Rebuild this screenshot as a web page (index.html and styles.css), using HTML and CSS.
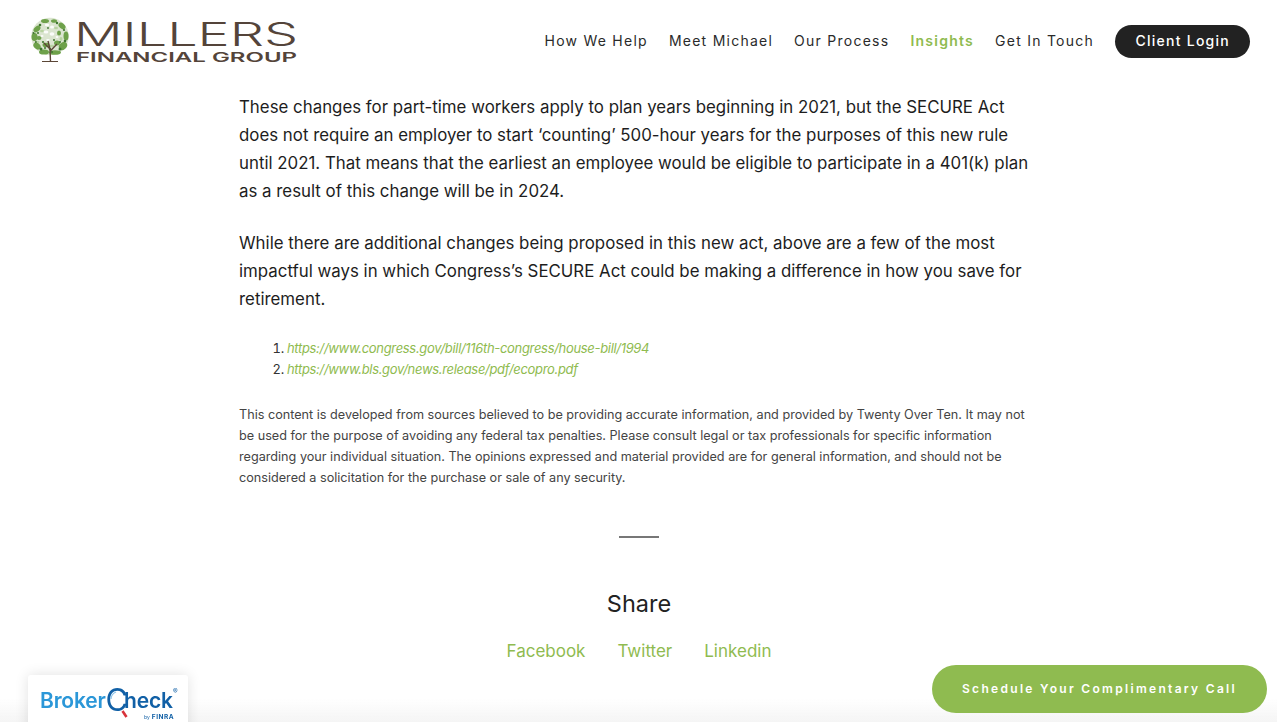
FILE: index.html
```html
<!DOCTYPE html>
<html lang="en">
<head>
<meta charset="utf-8">
<title>Millers Financial Group</title>
<link rel="stylesheet" href="styles.css">
</head>
<body>
<header class="site-header">
  <a class="logo" href="#" aria-label="Millers Financial Group">
    <svg width="270" height="50" viewBox="0 0 270 50">
      <circle cx="20" cy="20.500" r="18.700" fill="#dbe5d0"/>
      <g fill="#6ea14a">
        <ellipse cx="7" cy="13" rx="4" ry="2.500" transform="rotate(-40 7 13)"/>
        <ellipse cx="4.500" cy="21" rx="3" ry="4"/>
        <ellipse cx="7" cy="30" rx="4" ry="3" transform="rotate(40 7 30)"/>
        <ellipse cx="14" cy="36" rx="5" ry="2.600"/>
        <ellipse cx="25" cy="36.500" rx="6" ry="2.300"/>
        <ellipse cx="33" cy="30" rx="4.500" ry="3.500" transform="rotate(-40 33 30)"/>
        <ellipse cx="36" cy="20" rx="2.500" ry="4.500"/>
        <ellipse cx="32" cy="10" rx="4" ry="2.600" transform="rotate(40 32 10)"/>
        <ellipse cx="15" cy="5" rx="4" ry="2"/>
        <ellipse cx="24" cy="5" rx="3" ry="1.800"/>
        <ellipse cx="16" cy="29" rx="3.500" ry="2.200"/>
        <ellipse cx="27" cy="27" rx="3" ry="2.500"/>
        <ellipse cx="9" cy="22" rx="2.500" ry="2"/>
        <ellipse cx="29" cy="17" rx="2" ry="2.500"/>
      </g>
      <g fill="#3f7530">
        <circle cx="10" cy="9" r="1.300"/><circle cx="3.500" cy="17" r="1.100"/><circle cx="11" cy="33" r="1.500"/><circle cx="20" cy="33" r="1.200"/><circle cx="30" cy="33" r="1.500"/><circle cx="35" cy="25" r="1.300"/><circle cx="27" cy="7" r="1.200"/><circle cx="13" cy="26" r="1.100"/><circle cx="24" cy="24" r="1"/><circle cx="34" cy="14" r="1.100"/><circle cx="6" cy="26" r="1.100"/><circle cx="18" cy="12" r=".9"/><circle cx="8" cy="17" r="1"/><circle cx="30" cy="26" r="1"/><circle cx="22" cy="36" r="1"/><circle cx="15" cy="32" r="1"/>
      </g>
      <g fill="#b9d3a2">
        <ellipse cx="12" cy="15" rx="2" ry="1.300"/><ellipse cx="22" cy="30" rx="2.500" ry="1.300"/><ellipse cx="31" cy="23" rx="1.500" ry="2"/><ellipse cx="8" cy="26" rx="1.500" ry="1"/><ellipse cx="26" cy="12" rx="2" ry="1.300"/>
      </g>
      <g fill="#fbfcfa">
        <ellipse cx="17" cy="9" rx="2.200" ry="1.300"/><ellipse cx="22" cy="11" rx="2" ry="1.600"/><ellipse cx="16" cy="16" rx="2.400" ry="1.500"/><ellipse cx="22" cy="18" rx="2.400" ry="1.800"/><ellipse cx="27" cy="21" rx="1.400" ry="1.100"/><ellipse cx="12" cy="20" rx="1.500" ry="1.100"/><ellipse cx="18" cy="24" rx="1.800" ry="1.100"/>
      </g>
      <g class="trunk">
        <path d="M12 45.500h16" stroke-width="1"/>
        <path d="M20.500 45.500 L20 33 L18 25 M20 33 L14 27 M20.300 35 L27 28" stroke-width="1.400"/>
      </g>
      <text class="logo-big" x="44" y="29.500" textLength="224" lengthAdjust="spacingAndGlyphs">MILLERS</text>
      <text class="logo-small" x="46" y="46" textLength="221" lengthAdjust="spacingAndGlyphs">FINANCIAL GROUP</text>
    </svg>
  </a>
  <nav class="main-nav">
    <a href="#">How We Help</a>
    <a href="#">Meet Michael</a>
    <a href="#">Our Process</a>
    <a href="#" class="active">Insights</a>
    <a href="#">Get In Touch</a>
    <a href="#" class="login">Client Login</a>
  </nav>
</header>
<main class="article">
  <p>These changes for part-time workers apply to plan years beginning in 2021, but the SECURE Act does not require an employer to start ‘counting’ 500-hour years for the purposes of this new rule until 2021. That means that the earliest an employee would be eligible to participate in a 401(k) plan as a result of this change will be in 2024.</p>
  <p>While there are additional changes being proposed in this new act, above are a few of the most impactful ways in which Congress’s SECURE Act could be making a difference in how you save for retirement.</p>
  <ol class="refs">
    <li><a href="#">https://www.congress.gov/bill/116th-congress/house-bill/1994</a></li>
    <li><a href="#">https://www.bls.gov/news.release/pdf/ecopro.pdf</a></li>
  </ol>
  <p class="disclaimer">This content is developed from sources believed to be providing accurate information, and provided by Twenty Over Ten. It may not be used for the purpose of avoiding any federal tax penalties. Please consult legal or tax professionals for specific information regarding your individual situation. The opinions expressed and material provided are for general information, and should not be considered a solicitation for the purchase or sale of any security.</p>
  <hr class="rule">
  <h2 class="share-title">Share</h2>
  <div class="share-links">
    <a href="#">Facebook</a>
    <a href="#">Twitter</a>
    <a href="#">Linkedin</a>
  </div>
</main>
<div class="bottom-fade"></div>
<a class="broker" href="#">
  <span class="broker-word"><span class="b1">Broker</span><span class="b2"><span class="big-c">C</span>heck</span></span>
  <svg class="lens" width="30" height="36" viewBox="0 0 30 36"><path d="M16.500 25l4 6" stroke="#d8323a" stroke-width="2.600"/><path d="M5 13a8 8 0 0 1 5-7" fill="none" stroke="#8cc4ea" stroke-width="1.200"/></svg>
  <span class="reg">®</span>
  <span class="finra"><small>by</small> FINRA</span>
</a>
<a class="cta" href="#">Schedule Your Complimentary Call</a>
</body>
</html>
```
FILE: styles.css
```css
* { box-sizing: border-box; }
html, body { margin: 0; padding: 0; height: 100%; overflow: hidden; background: #fff; }
body { font-family: "Inter", "Open Sans", sans-serif; color: #222; }
a { text-decoration: none; color: inherit; }

.site-header { display: flex; align-items: center; justify-content: space-between; height: 82px; padding: 0 27px 0 30px; }
.logo { display: block; height: 50px; }
.logo svg { display: block; }
.trunk { stroke: #5b4636; fill: none; }
.logo-big { font-family: "Inter", sans-serif; font-size: 32px; font-weight: 300; fill: #54443a; }
.logo-small { font-family: "Inter", sans-serif; font-size: 13px; font-weight: 600; fill: #54443a; }

.main-nav { display: flex; align-items: center; gap: 21px; font-size: 14px; letter-spacing: 1.25px; color: #2a2a2a; }
.main-nav a { padding-bottom: 2px; }
.main-nav .active { color: #8fbb50; font-weight: 600; }
.main-nav .login { background: #222; color: #fff; border-radius: 17px; height: 33px; padding: 0 20px 2px 20.500px; display: flex; align-items: center; font-weight: 500; }

.article { width: 800px; margin-left: 239px; padding-top: 11px; }
.article p { margin: 0 0 24px; font-size: 16.85px; line-height: 28px; color: #1d1d1d; }
.refs { margin: 0; padding: 1px 0 0 48px; font-size: 13px; line-height: 21px; letter-spacing: -0.32px; color: #333; }
.refs a { color: #8fbb50; font-style: italic; }
.article .disclaimer { margin: 24px 0 0; font-size: 12.65px; line-height: 21px; color: #444; }
.rule { width: 40px; height: 2px; margin: 48px auto 0; border: 0; background: #777; }
.share-title { margin: 52px 0 0; text-align: center; font-size: 23.500px; line-height: 28px; font-weight: 400; color: #222; }
.share-links { display: flex; justify-content: center; gap: 32px; margin-top: 21px; font-size: 17px; line-height: 24px; color: #8fbb50; }

.bottom-fade { position: fixed; left: 0; right: 0; bottom: 0; height: 24px; background: linear-gradient(rgba(245,245,245,0), #f5f5f5); }
.broker { position: fixed; left: 28px; top: 675px; width: 160px; height: 60px; background: #fff; border-radius: 3px; box-shadow: 0 0 14px rgba(0,0,0,.12); }
.broker-word { position: absolute; left: 12px; top: 12px; font-size: 21px; line-height: 28px; font-weight: 600; letter-spacing: -0.2px; white-space: nowrap; }
.b1 { color: #2b97d8; }
.b2 { color: #1160a6; }
.big-c { font-size: 31px; line-height: 0; font-weight: 400; vertical-align: -3px; margin-right: -4px; }
.lens { position: absolute; left: 78px; top: 11px; }
.reg { position: absolute; left: 145px; top: 12px; font-size: 7px; line-height: 10px; color: #1160a6; }
.finra { position: absolute; left: 116px; top: 38px; font-size: 6.500px; line-height: 8px; font-weight: 700; letter-spacing: .5px; color: #1160a6; }
.finra small { font-size: 5px; font-weight: 400; letter-spacing: 0; }
.cta { position: fixed; left: 932px; top: 665px; width: 335px; height: 48px; padding-bottom: 2px; border-radius: 24px; background: #8fbb50; color: #fff; display: flex; align-items: center; justify-content: center; font-family: "Inter", sans-serif; font-size: 12px; font-weight: 600; letter-spacing: 2.3px; }
```
